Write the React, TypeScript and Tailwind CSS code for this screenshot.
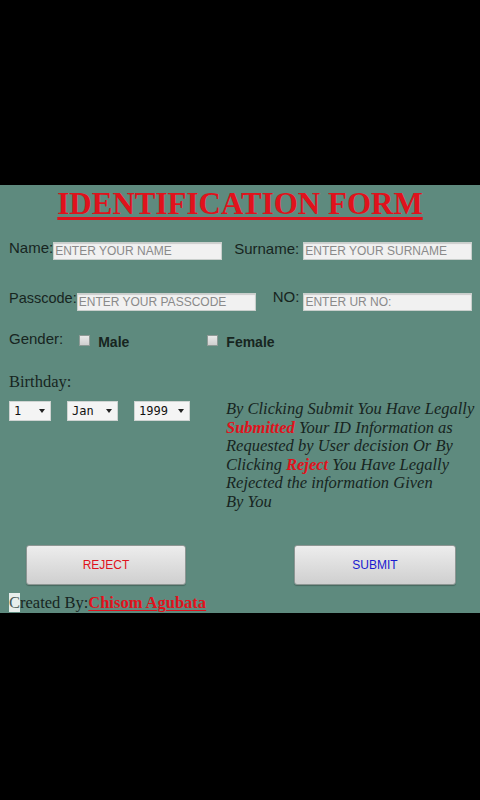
import React from "react";

const sans = "font-['Liberation_Sans',Arial,sans-serif]";
const serif = "font-['Liberation_Serif','Times_New_Roman',serif]";

function TextField({ placeholder, width }: { placeholder: string; width: string }) {
  return (
    <input
      type="text"
      placeholder={placeholder}
      className={`${width} h-[18px] border border-[#c9cfcc] bg-[#f1f1f1] px-[1px] text-[12px] text-[#333] placeholder:text-[#8a8a8a] shadow-[inset_0_1px_1px_rgba(0,0,0,0.15)] outline-none ${sans}`}
    />
  );
}

function Picker({ value, width }: { value: string; width: string }) {
  return (
    <div
      className={`${width} flex h-[20px] items-center justify-between border border-[#cfd4d2] bg-[#f4f4f4] pl-[4px] pr-[5px] text-[12px] text-[#111] font-['DejaVu_Sans_Mono',monospace]`}
    >
      <span>{value}</span>
      <span className="h-0 w-0 border-x-[3px] border-t-[4px] border-x-transparent border-t-[#222]" />
    </div>
  );
}

function Box() {
  return <span className="h-[11px] w-[11px] border border-[#8e9a96] bg-gradient-to-b from-[#e9e9e9] to-[#cfcfcf]" />;
}

export default function App() {
  return (
    <div className="flex h-[800px] w-[480px] flex-col bg-black">
      <div className="h-[185px]" />
      <div className={`flex h-[428px] flex-col bg-[#5e8a7e] text-[#17251f] ${sans}`}>
        <h1
          className={`mt-[1px] text-center text-[31px] font-bold leading-[36px] text-[#e0121c] underline decoration-[3px] underline-offset-[3px] ${serif}`}
        >
          IDENTIFICATION FORM
        </h1>

        <div className="mt-[17px] flex items-start pl-[9px]">
          <span className="text-[15px] leading-[17px]">Name:</span>
          <div className="mt-[3px] flex items-start">
            <TextField placeholder="ENTER YOUR NAME" width="w-[169px]" />
          </div>
          <span className="ml-[12px] mt-[1px] text-[15px] leading-[17px]">Surname:</span>
          <div className="ml-[4px] mt-[3px] flex items-start">
            <TextField placeholder="ENTER YOUR SURNAME" width="w-[169px]" />
          </div>
        </div>

        <div className="mt-[28px] flex items-start pl-[9px]">
          <span className="mt-[2px] text-[14.5px] leading-[17px]">Passcode:</span>
          <div className="mt-[1px]">
            <TextField placeholder="ENTER YOUR PASSCODE" width="w-[179px]" />
          </div>
          <span className="ml-[17px] text-[15px] leading-[17px]">NO:</span>
          <div className="ml-[4px] mt-[1px]">
            <TextField placeholder="ENTER UR NO:" width="w-[169px]" />
          </div>
        </div>

        <div className="mt-[17px] flex items-start pl-[9px]">
          <span className="text-[15px] leading-[17px]">Gender:</span>
          <div className="ml-[16px] mt-[5px] flex items-center">
            <Box />
          </div>
          <span className="ml-[8px] mt-[4px] text-[14px] font-bold leading-[17px]">Male</span>
          <div className="ml-[78px] mt-[5px] flex items-center">
            <Box />
          </div>
          <span className="ml-[8px] mt-[4px] text-[14px] font-bold leading-[17px]">Female</span>
        </div>

        <div className="mt-[21px] flex pl-[9px]">
          <div className="flex w-[217px] flex-col">
            <span className={`text-[16.5px] leading-[19px] ${serif}`}>Birthday:</span>
            <div className="mt-[10px] flex gap-[16px]">
              <Picker value="1" width="w-[42px]" />
              <Picker value="Jan" width="w-[51px]" />
              <Picker value="1999" width="w-[56px]" />
            </div>
          </div>
          <p className={`mt-[28px] text-[16.5px] italic leading-[18.5px] text-[#17251f] ${serif}`}>
            By Clicking Submit You Have Legally
            <br />
            <b className="text-[#e0121c]">Submitted</b> Your ID Information as
            <br />
            Requested by User decision Or By
            <br />
            Clicking <b className="text-[#e0121c]">Reject</b> You Have Legally
            <br />
            Rejected the information Given
            <br />
            By You
          </p>
        </div>

        <div className="mt-[34px] flex">
          <button
            type="button"
            className={`ml-[26px] h-[40px] w-[160px] rounded-[3px] border border-[#8d9693] bg-gradient-to-b from-[#ededed] to-[#cfcfcf] text-[12px] text-[#e0121c] shadow-[0_1px_1px_rgba(0,0,0,0.25)] ${sans}`}
          >
            REJECT
          </button>
          <button
            type="button"
            className={`ml-[108px] h-[40px] w-[162px] rounded-[3px] border border-[#8d9693] bg-gradient-to-b from-[#ededed] to-[#cfcfcf] text-[12px] text-[#1a1ad0] shadow-[0_1px_1px_rgba(0,0,0,0.25)] ${sans}`}
          >
            SUBMIT
          </button>
        </div>

        <p className={`mt-[8px] pl-[9px] text-[16.5px] leading-[19px] ${serif}`}>
          <span className="bg-[#e8eeec] text-[#4b5a55]">C</span>reated By:
          <b className="text-[#e0121c] underline decoration-[1px] underline-offset-[2px]">Chisom Agubata</b>
        </p>
      </div>
      <div className="flex-1" />
    </div>
  );
}
